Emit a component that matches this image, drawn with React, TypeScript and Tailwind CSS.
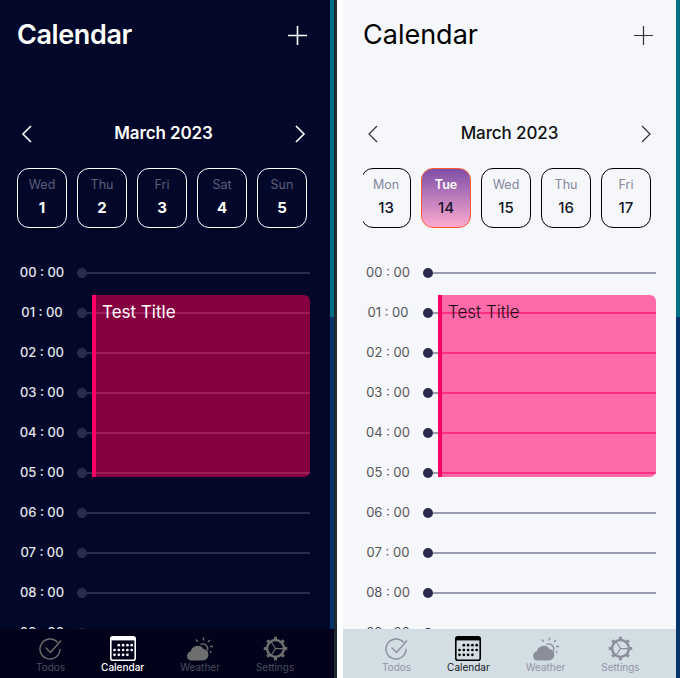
import React from 'react';

type Theme = {
    page: string;
    title: string;
    plus: string;
    month: string;
    chevron: string;
    stroke: number;
    cardBorder: string;
    dayName: string;
    dayNum: string;
    time: string;
    dot: string;
    line: string;
    event: string;
    eventLine: string;
    eventText: string;
    nav: string;
    navLabel: string;
    navActive: string;
    icon: string;
    activeIcon: string;
    activeBg: string;
    offset: string;
    navOffset: string;
};

const dark: Theme = {
    page: 'bg-[#03082a]',
    title: 'text-white font-semibold tracking-[-0.4px]',
    plus: '#ffffff',
    month: 'text-white font-semibold',
    chevron: '#ffffff',
    stroke: 1.6,
    cardBorder: 'border-white',
    dayName: 'text-[#5c5f78]',
    dayNum: 'text-white font-bold',
    time: 'text-[#e4e5ea] font-medium',
    dot: 'bg-[#2a2c49]',
    line: 'bg-[#2a2c49]',
    event: 'bg-[#85003f]',
    eventLine: 'bg-[#9c1f58]',
    eventText: 'text-white',
    nav: 'bg-[#02031a]',
    navLabel: 'text-[#4a4d5c]',
    navActive: 'text-white font-medium',
    icon: '#6e6e6e',
    activeIcon: '#ffffff',
    activeBg: '#02031a',
    offset: 'ml-0',
    navOffset: 'pl-[36px]',
};

const light: Theme = {
    page: 'bg-[#f5f7fa]',
    title: 'text-black font-normal',
    plus: '#333333',
    month: 'text-[#111111] font-medium',
    chevron: '#333333',
    stroke: 1.2,
    cardBorder: 'border-black',
    dayName: 'text-[#85879e]',
    dayNum: 'text-[#15162a] font-medium',
    time: 'text-[#555555] font-normal',
    dot: 'bg-[#2a2b4d]',
    line: 'bg-[#9a9bac]',
    event: 'bg-[#ff6ba8]',
    eventLine: 'bg-[#ff2e85]',
    eventText: 'text-[#1a0a14] font-light',
    nav: 'bg-[#d2dee3]',
    navLabel: 'text-[#9294a8]',
    navActive: 'text-[#15162a] font-normal',
    icon: '#8c8e9c',
    activeIcon: '#000000',
    activeBg: '#d2dee3',
    offset: 'ml-[3px]',
    navOffset: 'pl-[39px]',
};

const hours = ['00', '01', '02', '03', '04', '05', '06', '07', '08', '09'];

// rows of the calendar glyph, by column index
const calendarDots = [
    [1, 2, 3, 4],
    [0, 1, 2, 3, 4],
    [0, 1, 2, 3],
];

const Plus = ({ color, stroke }: { color: string; stroke: number }) => (
    <svg width="19" height="19" viewBox="0 0 19 19" fill="none" stroke={color} strokeWidth={stroke} className="mt-px">
        <path d="M9.5 0v19M0 9.5h19" />
    </svg>
);

const Chevron = ({ color, stroke, flip }: { color: string; stroke: number; flip?: boolean }) => (
    <svg width="12" height="18" viewBox="0 0 12 18" fill="none" stroke={color} strokeWidth={stroke} className={flip ? 'rotate-180' : ''}>
        <path d="M10 1 2 9l8 8" />
    </svg>
);

const DayCard = ({ t, name, num, selected }: { t: Theme; name: string; num: number; selected?: boolean }) => (
    <div
        className={`w-[50px] h-[60px] shrink-0 rounded-xl border flex flex-col items-center pt-[8px] ${
            selected ? 'border-[#ff5a36] bg-gradient-to-b from-[#7f4ea6] to-[#ffaacf]' : t.cardBorder
        }`}
    >
        <span className={`text-[12.5px] leading-4 ${selected ? 'text-white font-semibold' : t.dayName}`}>{name}</span>
        <span className={`text-[15px] leading-5 mt-[5px] ${t.dayNum}`}>{num}</span>
    </div>
);

const TodosIcon = ({ color }: { color: string }) => (
    <svg width="24" height="25" viewBox="0 0 24 25" fill="none" stroke={color} strokeWidth="1.4">
        <path d="M18.6 6.5A10 10 0 1 0 21 13" />
        <path d="M6.5 11.5l5 5 10.5-12" />
    </svg>
);

const CalendarIcon = ({ t }: { t: Theme }) => (
    <svg width="26" height="25" viewBox="0 0 26 25">
        <rect x="0.8" y="0.8" width="24.4" height="23.4" rx="2" fill={t.activeBg} stroke={t.activeIcon} strokeWidth="1.6" />
        <rect x="1" y="1" width="24" height="3.4" fill={t.activeIcon} />
        {calendarDots.map((cols, row) =>
            cols.map((c) => <circle key={`${row}-${c}`} cx={4.5 + c * 4.3} cy={9.2 + row * 4.8} r="1.35" fill={t.activeIcon} />),
        )}
    </svg>
);

const WeatherIcon = ({ color }: { color: string }) => (
    <svg width="26" height="25" viewBox="0 0 26 25" fill="none">
        <path d="M4.5 24.5a4.5 4.5 0 0 1-.8-8.9A7 7 0 0 1 16.5 13a5.8 5.8 0 0 1 4.9 5.7 5.8 5.8 0 0 1-5.7 5.8Z" fill={color} />
        <path d="M13.5 8.5a5 5 0 0 1 7 6" stroke={color} strokeWidth="1.4" />
        <path d="M16.5 1.5v3M23 4l-2 2M26 10.5h-3M9 3.5l1.7 2.2M24.5 16.5l-1.8-1.2" stroke={color} strokeWidth="1.4" />
    </svg>
);

const SettingsIcon = ({ color }: { color: string }) => (
    <svg width="25" height="25" viewBox="0 0 26 26" fill="none" stroke={color}>
        <circle cx="13" cy="13" r="8.8" strokeWidth="2.6" />
        <path d="M13 .8v3.4M13 21.8v3.4M.8 13h3.4M21.8 13h3.4M4.4 4.4l2.4 2.4M19.2 19.2l2.4 2.4M4.4 21.6l2.4-2.4M19.2 6.8l2.4-2.4" strokeWidth="3.2" />
        <path d="M13 13h8M13 13l-4.5-7M13 13l-4.5 7" strokeWidth="1.3" />
    </svg>
);

const NavItem = ({ label, className, children }: { label: string; className: string; children: React.ReactNode }) => (
    <div className="flex flex-col items-center pt-[7px]">
        <div className="h-[25px] flex items-center">{children}</div>
        <span className={`text-[10px] leading-3 ${className}`}>{label}</span>
    </div>
);

const Scrollbar = () => (
    <div className="w-1 flex flex-col shrink-0">
        <div className="h-[317px] bg-[#007184]" />
        <div className="flex-1 bg-[#04346a]" />
    </div>
);

const Content = ({ t, days, clip }: { t: Theme; days: { name: string; num: number; selected?: boolean }[]; clip?: boolean }) => (
    <div className={`w-[330px] h-[629px] flex flex-col overflow-hidden shrink-0 ${t.offset}`}>
        {/* header */}
        <div className="flex items-center justify-between h-[70px] shrink-0 pl-[17px] pr-[23px]">
            <h1 className={`text-[27px] leading-8 ${t.title}`}>Calendar</h1>
            <Plus color={t.plus} stroke={t.stroke} />
        </div>
        {/* month */}
        <div className="flex items-center justify-between mt-[51px] h-[26px] shrink-0 pl-[21px] pr-[24px]">
            <Chevron color={t.chevron} stroke={t.stroke} />
            <span className={`text-[17px] tracking-[-0.1px] ${t.month}`}>March 2023</span>
            <Chevron color={t.chevron} stroke={t.stroke} flip />
        </div>
        {/* days */}
        <div className="mt-[21px] ml-[17px] mr-[20px] overflow-hidden flex gap-[10px] shrink-0">
            {days.map((d, i) => (
                <div key={d.num} className={clip && i === 0 ? '-ml-[2px]' : ''}>
                    <DayCard t={t} {...d} />
                </div>
            ))}
        </div>
        {/* timeline */}
        <div className="relative flex-1 min-h-0 overflow-hidden pt-[25px]">
            {hours.map((h) => (
                <div key={h} className="flex items-center h-[40px]">
                    <span className={`w-[77px] text-center pl-[7px] text-[13px] ${t.time}`}>{h} : 00</span>
                    <span className={`w-[10px] h-[10px] rounded-full shrink-0 ${t.dot}`} />
                    <span className={`w-[223px] h-[2px] ${t.line}`} />
                </div>
            ))}
            <div className={`absolute left-[92px] top-[67px] w-[218px] h-[182px] border-l-4 border-[#ff0066] rounded-r-md overflow-hidden flex flex-col gap-[38px] pt-[17px] ${t.event}`}>
                {[0, 1, 2, 3, 4].map((n) => (
                    <div key={n} className={`h-[2px] shrink-0 ${t.eventLine}`} />
                ))}
                <span className={`absolute left-[6px] top-0 text-[17px] leading-[34px] ${t.eventText}`}>Test Title</span>
            </div>
        </div>
    </div>
);

const BottomNav = ({ t }: { t: Theme }) => (
    <div className={`h-[49px] shrink-0 flex items-start gap-[36px] ${t.navOffset} ${t.nav}`}>
        <NavItem label="Todos" className={t.navLabel}><TodosIcon color={t.icon} /></NavItem>
        <NavItem label="Calendar" className={t.navActive}><CalendarIcon t={t} /></NavItem>
        <NavItem label="Weather" className={t.navLabel}><WeatherIcon color={t.icon} /></NavItem>
        <NavItem label="Settings" className={t.navLabel}><SettingsIcon color={t.icon} /></NavItem>
    </div>
);

export default function App() {
    return (
        <div className="w-[680px] h-[678px] flex bg-white overflow-hidden font-['Inter',sans-serif]">
            {/* dark phone */}
            <div className={`w-[334px] h-[678px] shrink-0 flex flex-col ${dark.page}`}>
                <div className="flex h-[629px]">
                    <Content
                        t={dark}
                        days={[
                            { name: 'Wed', num: 1 },
                            { name: 'Thu', num: 2 },
                            { name: 'Fri', num: 3 },
                            { name: 'Sat', num: 4 },
                            { name: 'Sun', num: 5 },
                        ]}
                    />
                    <Scrollbar />
                </div>
                <BottomNav t={dark} />
            </div>
            <div className="w-[3px] bg-[#1f2a30] shrink-0" />
            <div className="w-[6px] shrink-0" />
            {/* light phone */}
            <div className={`w-[333px] h-[678px] shrink-0 flex flex-col ${light.page}`}>
                <Content
                    t={light}
                    clip
                    days={[
                        { name: 'Mon', num: 13 },
                        { name: 'Tue', num: 14, selected: true },
                        { name: 'Wed', num: 15 },
                        { name: 'Thu', num: 16 },
                        { name: 'Fri', num: 17 },
                    ]}
                />
                <BottomNav t={light} />
            </div>
            <Scrollbar />
        </div>
    );
}
